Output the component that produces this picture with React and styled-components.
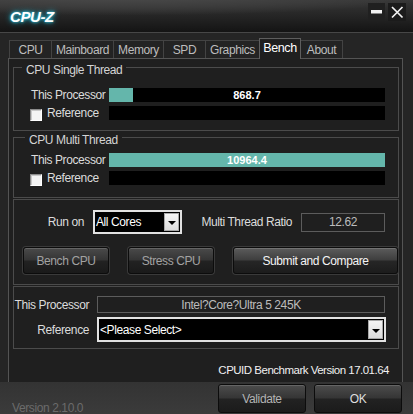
import styled, { createGlobalStyle } from "styled-components";

const GlobalStyle = createGlobalStyle`
  html, body {
    margin: 0;
    padding: 0;
    background: #252525;
  }
  body {
    font-family: "Liberation Sans", Arial, sans-serif;
    font-size: 11.5px;
    color: #d6d6d6;
  }
`;

const tabs = [
  { label: "CPU", w: 43 },
  { label: "Mainboard", w: 63 },
  { label: "Memory", w: 51 },
  { label: "SPD", w: 43 },
  { label: "Graphics", w: 55 },
  { label: "Bench", w: 42, active: true },
  { label: "About", w: 43 },
];

// bar scale used by the bench window
const SCALE = 10000;

const results = {
  single: 868.7,
  multi: 10964.4,
};

const pct = (v) => Math.min(100, (v / SCALE) * 100).toFixed(2) + "%";

const App = () => {
  return (
    <Window>
      <GlobalStyle />
      <TitleBar>
        <Logo>CPU-Z</Logo>
        <Controls>
          <CtrlBtn>
            <svg width="17" height="18" viewBox="0 0 17 18">
              <rect x="3" y="7" width="11" height="3.5" fill="#f2f2f2" />
            </svg>
          </CtrlBtn>
          <CtrlBtn $dark>
            <svg width="18" height="18" viewBox="0 0 18 18">
              <path
                d="M4 4 L14.5 14.5 M14.5 4 L4 14.5"
                stroke="#f2f2f2"
                strokeWidth="1.7"
                fill="none"
              />
            </svg>
          </CtrlBtn>
        </Controls>
      </TitleBar>

      <Body>
        <TabRow>
          {tabs.map((t) => (
            <Tab key={t.label} $w={t.w} $active={t.active}>
              {t.label}
            </Tab>
          ))}
        </TabRow>

        <Panel>
          <Group>
            <Legend $ml={8}>CPU Single Thread</Legend>
            <Rows $mt={11} $pb={10}>
              <Row>
                <RowLabel>This Processor</RowLabel>
                <Bar style={{ "--pct": pct(results.single) }}>
                  {results.single.toFixed(1)}
                </Bar>
              </Row>
              <Row>
                <RowLabel>
                  <Check />
                  Reference
                </RowLabel>
                <Bar style={{ "--pct": "0%" }} />
              </Row>
            </Rows>
          </Group>

          <Group $mt={6}>
            <Legend $ml={11}>CPU Multi Thread</Legend>
            <Rows $mt={6} $pb={12}>
              <Row>
                <RowLabel>This Processor</RowLabel>
                <Bar style={{ "--pct": pct(results.multi) }}>
                  {results.multi.toFixed(1)}
                </Bar>
              </Row>
              <Row>
                <RowLabel>
                  <Check />
                  Reference
                </RowLabel>
                <Bar style={{ "--pct": "0%" }} />
              </Row>
            </Rows>
          </Group>

          <Group $mt={1}>
            <RunSection>
              <RunRow>
                <FieldLabel $w={79}>Run on</FieldLabel>
                <Select $w={89} $h={24}>
                  <SelectText>All Cores</SelectText>
                  <DropBtn>
                    <Arrow />
                  </DropBtn>
                </Select>
                <FieldLabel $w={119}>Multi Thread Ratio</FieldLabel>
                <ReadBox $w={84} $h={19}>
                  12.62
                </ReadBox>
              </RunRow>
              <ButtonRow>
                <ActionBtn $w={86}>Bench CPU</ActionBtn>
                <ActionBtn $w={86}>Stress CPU</ActionBtn>
                <ActionBtn $w={165} $primary>
                  Submit and Compare
                </ActionBtn>
              </ButtonRow>
            </RunSection>
          </Group>

          <Group $mt={1}>
            <CompareSection>
              <CompareRow>
                <FieldLabel $w={83} $pr={8}>
                  This Processor
                </FieldLabel>
                <ReadBox $w={288} $h={17}>
                  Intel?Core?Ultra 5 245K
                </ReadBox>
              </CompareRow>
              <CompareRow>
                <FieldLabel $w={83} $pr={8}>
                  Reference
                </FieldLabel>
                <Select $w={289} $h={25}>
                  <SelectText>&lt;Please Select&gt;</SelectText>
                  <DropBtn>
                    <Arrow />
                  </DropBtn>
                </Select>
              </CompareRow>
            </CompareSection>
          </Group>

          <BenchVersion>CPUID Benchmark Version 17.01.64</BenchVersion>
        </Panel>
      </Body>

      <Footer>
        <AppVersion>Version 2.10.0</AppVersion>
        <FooterButtons>
          <FooterBtn>Validate</FooterBtn>
          <FooterBtn $bright>OK</FooterBtn>
        </FooterButtons>
      </Footer>
    </Window>
  );
};

export default App;

const Window = styled.div`
  width: 413px;
  height: 414px;
  display: flex;
  flex-direction: column;
  overflow: hidden;
  background: #252525;
  letter-spacing: -0.4px;
`;

const TitleBar = styled.div`
  height: 33px;
  box-sizing: border-box;
  display: flex;
  justify-content: space-between;
  align-items: flex-start;
  padding: 3px 7px 0 10px;
  border-bottom: 1px solid #474747;
  background: radial-gradient(
      ellipse 110% 120% at 30% -50%,
      #5c5c5c 0%,
      #3f3f3f 55%,
      rgba(40, 40, 40, 0) 82%
    ),
    linear-gradient(#363636, #141414);
`;

const Logo = styled.div`
  margin-top: 5px;
  font-size: 15px;
  line-height: 18px;
  font-weight: bold;
  font-style: italic;
  letter-spacing: -0.4px;
  color: #ffffff;
  text-shadow: 0 0 3px #33e0ff, 0 0 6px #1ab8d8;
`;

const Controls = styled.div`
  display: flex;
  gap: 3px;
`;

const CtrlBtn = styled.div`
  display: flex;
  background: ${(p) => (p.$dark ? "#1b1b1b" : "#202020")};
`;

const Body = styled.div`
  flex: 1;
  display: flex;
  flex-direction: column;
  padding: 5px 10px 0 8px;
`;

const TabRow = styled.div`
  height: 20px;
  display: flex;
  align-items: flex-end;
  padding-left: 1px;
`;

const Tab = styled.div`
  position: relative;
  box-sizing: border-box;
  width: ${(p) => p.$w}px;
  height: ${(p) => (p.$active ? 21 : 18)}px;
  margin-left: -1px;
  margin-bottom: ${(p) => (p.$active ? -1 : 0)}px;
  z-index: ${(p) => (p.$active ? 1 : 0)};
  display: flex;
  align-items: center;
  justify-content: center;
  border: 1px solid ${(p) => (p.$active ? "#5e5e5e" : "#434343")};
  border-bottom: none;
  background: ${(p) => (p.$active ? "#1f1f1f" : "#232323")};
  color: ${(p) => (p.$active ? "#ffffff" : "#bdbdbd")};
  font-size: ${(p) => (p.$active ? 12.5 : 12)}px;
  padding-bottom: ${(p) => (p.$active ? 2 : 0)}px;

  &:first-child {
    margin-left: 0;
  }
`;

const Panel = styled.div`
  box-sizing: border-box;
  height: 324px;
  display: flex;
  flex-direction: column;
  padding: 8px 3px 0 4px;
  border: 1px solid #545454;
  border-bottom: none;
  background: #1f1f1f;
`;

const Group = styled.div`
  margin-top: ${(p) => p.$mt || 0}px;
  border: 1px solid #4b4b4b;
  display: flex;
  flex-direction: column;
`;

const Legend = styled.div`
  align-self: flex-start;
  margin: -4px 0 0 ${(p) => p.$ml}px;
  padding: 0 4px;
  height: 13px;
  line-height: 13px;
  background: #1f1f1f;
  color: #d4d4d4;
  font-size: 12px;
`;

const Rows = styled.div`
  display: flex;
  flex-direction: column;
  gap: 4px;
  padding: ${(p) => p.$mt}px 0 ${(p) => p.$pb}px 17px;
`;

const Row = styled.div`
  display: flex;
  align-items: flex-start;
  height: 14px;
`;

const RowLabel = styled.div`
  width: 78px;
  display: flex;
  align-items: center;
  gap: 5px;
  line-height: 14px;
  color: #dcdcdc;
  font-size: 12px;
`;

const Check = styled.span`
  box-sizing: border-box;
  width: 12px;
  height: 12px;
  margin: 3px 0 -1px -1px;
  background: #f4f4f4;
  border: 1px solid;
  border-color: #8c8c8c #ffffff #ffffff #8c8c8c;
  box-shadow: inset 1px 1px 0 #c9c9c9;
`;

const Bar = styled.div`
  width: 276px;
  height: 14px;
  line-height: 14px;
  text-align: center;
  font-weight: bold;
  color: #ffffff;
  font-size: 11px;
  letter-spacing: 0;
  background: linear-gradient(
    to right,
    #64b6ab var(--pct),
    #000000 var(--pct)
  );
`;

const RunSection = styled.div`
  display: flex;
  flex-direction: column;
  gap: 13px;
  padding: 10px 0 10px 9px;
`;

const RunRow = styled.div`
  display: flex;
  align-items: center;
  height: 24px;
  margin-left: -9px;
`;

const FieldLabel = styled.div`
  box-sizing: border-box;
  width: ${(p) => p.$w}px;
  padding-right: ${(p) => p.$pr ?? 9}px;
  text-align: right;
  color: #dcdcdc;
  font-size: 12px;
  white-space: nowrap;
`;

const Select = styled.div`
  box-sizing: border-box;
  width: ${(p) => p.$w}px;
  height: ${(p) => p.$h}px;
  display: flex;
  border: 2px solid #e2e2e2;
  background: #000000;
`;

const SelectText = styled.div`
  flex: 1;
  display: flex;
  align-items: center;
  padding-left: 1px;
  color: #ffffff;
  font-size: 12px;
`;

const DropBtn = styled.div`
  box-sizing: border-box;
  width: 15px;
  display: flex;
  align-items: center;
  justify-content: center;
  margin: 1px 1px 1px 0;
  background: linear-gradient(#f4f4f4, #dcdcdc);
  border: 1px solid #a8a8a8;
`;

const Arrow = styled.span`
  width: 0;
  height: 0;
  margin-top: 2px;
  border-left: 4px solid transparent;
  border-right: 4px solid transparent;
  border-top: 4px solid #000000;
`;

const ReadBox = styled.div`
  box-sizing: border-box;
  width: ${(p) => p.$w}px;
  height: ${(p) => p.$h}px;
  display: flex;
  align-items: center;
  justify-content: center;
  border: 1px solid #5c5c5c;
  background: #1f1f1f;
  color: #bcbcbc;
  font-size: 12px;
`;

const ButtonRow = styled.div`
  display: flex;
  gap: 19px;
`;

const ActionBtn = styled.div`
  box-sizing: border-box;
  width: ${(p) => p.$w}px;
  height: 27px;
  display: flex;
  align-items: center;
  justify-content: center;
  border: 1px solid #0c0c0c;
  border-radius: 3px;
  background: ${(p) =>
    p.$primary
      ? "linear-gradient(#5c5c5c 0%, #3e3e3e 48%, #262626 52%, #1c1c1c 100%)"
      : "linear-gradient(#4a4a4a 0%, #343434 48%, #222222 52%, #1a1a1a 100%)"};
  box-shadow: inset 0 1px 0 rgba(255, 255, 255, 0.15),
    0 0 0 1px #3a3a3a;
  color: ${(p) => (p.$primary ? "#f4f4f4" : "#a2a2a2")};
  font-size: 12px;
`;

const CompareSection = styled.div`
  display: flex;
  flex-direction: column;
  gap: 4px;
  padding: 9px 0 6px 0;
`;

const CompareRow = styled.div`
  display: flex;
  align-items: center;
`;

const BenchVersion = styled.div`
  margin-top: 14px;
  padding-right: 10px;
  text-align: right;
  line-height: 14px;
  color: #f0f0f0;
  font-size: 11.5px;
  letter-spacing: -0.5px;
`;

const Footer = styled.div`
  height: 32px;
  box-sizing: border-box;
  display: flex;
  justify-content: space-between;
  align-items: flex-start;
  padding: 2px 11px 0 12px;
  background: linear-gradient(#333333, #3b3b3b);
`;

const AppVersion = styled.div`
  margin-top: 17px;
  color: #6b6b6b;
  font-size: 12px;
`;

const FooterButtons = styled.div`
  display: flex;
  gap: 8px;
`;

const FooterBtn = styled.div`
  box-sizing: border-box;
  width: 88px;
  height: 29px;
  display: flex;
  align-items: center;
  justify-content: center;
  border: 1px solid #0c0c0c;
  border-radius: 3px;
  background: linear-gradient(#4c4c4c 0%, #353535 48%, #222222 52%, #1b1b1b 100%);
  box-shadow: inset 0 1px 0 rgba(255, 255, 255, 0.15);
  color: ${(p) => (p.$bright ? "#dedede" : "#b4b4b4")};
  font-size: 12px;
`;
